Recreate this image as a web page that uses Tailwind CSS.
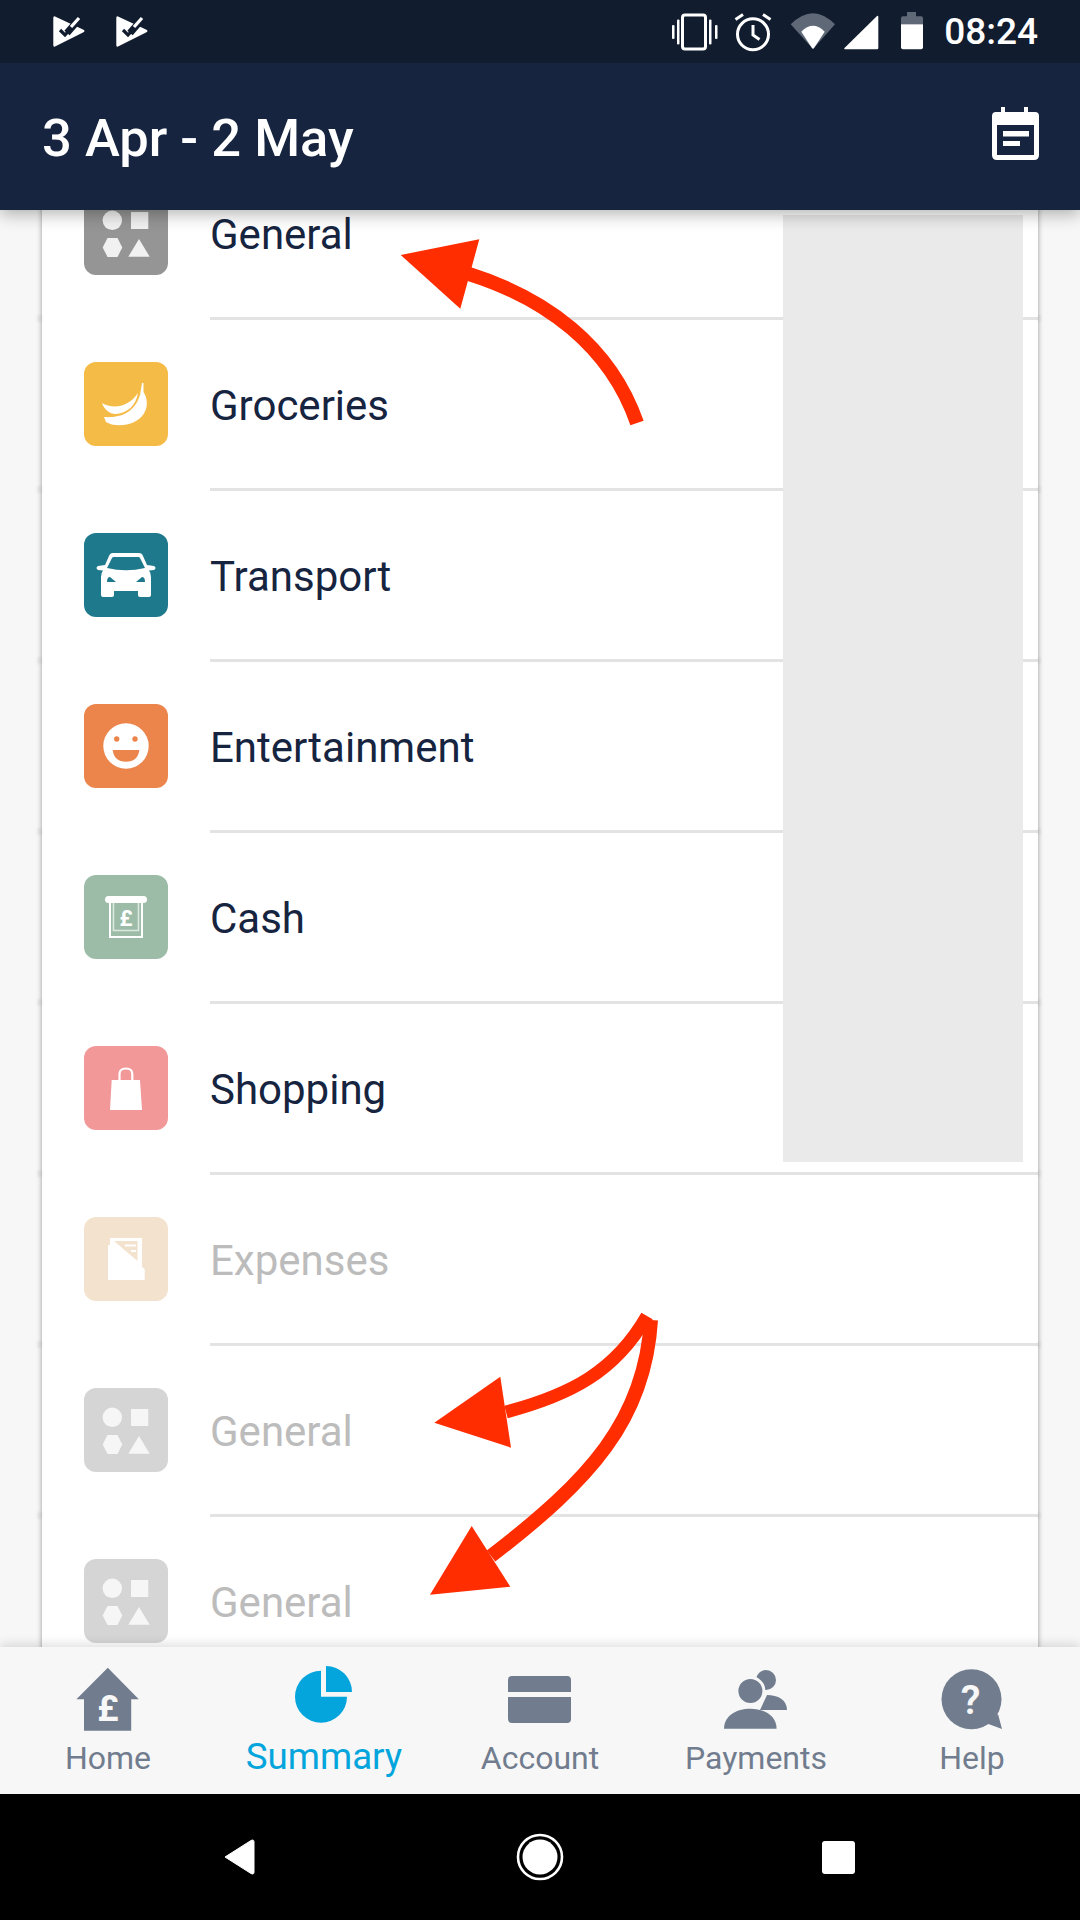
<!DOCTYPE html>
<html lang="en">
<head>
    <meta charset="UTF-8">
    <meta name="viewport" content="width=device-width, initial-scale=1.0">
    <title>Summary</title>
    <script src="https://cdn.jsdelivr.net/npm/@tailwindcss/browser@4"></script>
</head>
<body class="relative w-[1080px] h-[1920px] overflow-hidden bg-[#f7f7f7] font-[Roboto,sans-serif] flex flex-col">

    <!-- status bar -->
    <div class="h-[63px] bg-[#111c2e] flex items-center text-white shrink-0 relative z-20">
        <svg class="ml-[50px] w-[36px] h-[36px]" viewBox="0 0 36 36">
            <path d="M5 2.5 L33 15.5 Q36 17 33 18.5 L5 32.5 Q3.3 33.5 3.3 31 L3.3 4 Q3.3 1.700 5 2.500Z" fill="#fff"/>
            <path d="M17 19 L31 3" stroke="#111c2e" stroke-width="7" fill="none"/>
            <path d="M10 16 L15 21 L21 14.500" stroke="#111c2e" stroke-width="3.200" fill="none"/>
            <path d="M21 13 L29 4" stroke="#fff" stroke-width="3.200" fill="none"/>
        </svg>
        <svg class="ml-[27px] w-[36px] h-[36px]" viewBox="0 0 36 36">
            <path d="M5 2.5 L33 15.5 Q36 17 33 18.5 L5 32.5 Q3.3 33.5 3.3 31 L3.3 4 Q3.3 1.700 5 2.500Z" fill="#fff"/>
            <path d="M17 19 L31 3" stroke="#111c2e" stroke-width="7" fill="none"/>
            <path d="M10 16 L15 21 L21 14.500" stroke="#111c2e" stroke-width="3.200" fill="none"/>
            <path d="M21 13 L29 4" stroke="#fff" stroke-width="3.200" fill="none"/>
        </svg>
        <div class="flex-1"></div>
        <!-- vibrate -->
        <svg class="w-[47px] h-[40px]" viewBox="0 0 47 40" fill="#fff">
            <rect x="11.500" y="3" width="23" height="34" rx="2.500" fill="none" stroke="#fff" stroke-width="3"/>
            <rect x="1" y="13" width="2.500" height="14" rx="1"/>
            <rect x="6" y="7.500" width="2.500" height="25" rx="1"/>
            <rect x="38" y="7.500" width="2.500" height="25" rx="1"/>
            <rect x="44" y="13" width="2.500" height="14" rx="1"/>
        </svg>
        <!-- alarm -->
        <svg class="ml-[16px] w-[38px] h-[40px]" viewBox="0 0 38 40" fill="none" stroke="#fff" stroke-width="3">
            <circle cx="19" cy="22.300" r="15.500"/>
            <path d="M19 13 V23 L25.500 27.500"/>
            <path d="M1.500 7.500 L9 2.500"/>
            <path d="M29 2.500 L36.500 7.500"/>
        </svg>
        <!-- wifi -->
        <svg class="ml-[18px] w-[46px] h-[40px]" viewBox="0 0 46 40">
            <path d="M0.700 12.300 Q23 -10 45 12.300 L24 36 Q23 37.500 22 36Z" fill="#5f6877"/>
            <path d="M11.300 19.700 Q23 8 34.700 19.700 L24 36 Q23 37.500 22 36Z" fill="#fff"/>
        </svg>
        <!-- signal -->
        <svg class="ml-[7px] w-[36px] h-[40px]" viewBox="0 0 36 40">
            <path d="M34 4 Q35.300 3 35.300 5 L35.300 36 Q35.300 37.300 34 37.300 L2 37.300 Q0.500 37.300 1.500 36Z" fill="#fff"/>
        </svg>
        <!-- battery -->
        <svg class="ml-[22px] w-[22px] h-[40px]" viewBox="0 0 22 40">
            <path d="M6 0 H15 V4.300 H20 Q22 4.300 22 6.300 V12.300 H0 V6.300 Q0 4.300 2 4.300 H6Z" fill="#5f6877"/>
            <path d="M0 12.300 H22 V35.300 Q22 37.300 20 37.300 H2 Q0 37.300 0 35.300Z" fill="#fff"/>
        </svg>
        <span class="ml-[21px] mr-[42px] text-[37px] font-medium leading-none">08:24</span>
    </div>

    <!-- app bar -->
    <div class="h-[147px] bg-[#16243f] flex items-center justify-between pl-[42px] pr-[40px] shrink-0 relative z-10 shadow-[0_4px_16px_rgba(0,0,0,0.3)]">
        <h1 class="text-white text-[52.500px] font-medium leading-none mt-[3px]">3 Apr - 2 May</h1>
        <svg class="w-[48px] h-[54px] mb-[6px]" viewBox="0 0 48 54" fill="#fff">
            <path fill-rule="evenodd" d="M9 0 H13 V5 H32 V0 H36 V5 H43 Q47 5 47 9 V48 Q47 53 42 53 H5 Q0 53 0 48 V9 Q0 5 4 5 H9Z M5 18 V48 H42 V18Z"/>
            <rect x="11" y="24" width="26" height="5.500"/>
            <rect x="11" y="34" width="17" height="5"/>
        </svg>
    </div>

    <!-- list -->
    <main class="relative flex-1 overflow-hidden px-[42px]">
        <div class="-mt-[61px] bg-white shadow-[0_0_5px_rgba(0,0,0,0.4)]">

            <div class="relative flex h-[171px]">
                <div class="pl-[42px] pt-[42px]">
                    <svg class="w-[84px] h-[84px]" viewBox="0 0 84 84">
                        <rect width="84" height="84" rx="12" fill="#959595"/>
                        <g fill="#f1f1f1">
                            <circle cx="28.300" cy="29.300" r="9.700"/>
                            <rect x="47" y="21" width="17.300" height="17"/>
                            <path d="M23.500 47 H33.500 L38.300 56.500 L33.500 66 H23.500 L18.700 56.500Z"/>
                            <path d="M55 48 L65.700 65.700 H44.300Z"/>
                        </g>
                    </svg>
                </div>
                <div class="flex-1 ml-[42px] pt-[2px] flex items-center border-b-[3px] border-[#e3e3e3] text-[42px] text-[#16243f]">General</div>
                <span class="absolute left-[-5px] bottom-[-2px] w-[5px] h-[7px] bg-black/5 blur-[1px]"></span>
                <span class="absolute right-[-3px] bottom-[-2px] w-[3px] h-[7px] bg-black/5 blur-[1px]"></span>
            </div>

            <div class="relative flex h-[171px]">
                <div class="pl-[42px] pt-[42px]">
                    <svg class="w-[84px] h-[84px]" viewBox="0 0 84 84">
                        <rect width="84" height="84" rx="12" fill="#f5bb47"/>
                        <g fill="#fff">
                            <path d="M18 41 C28 47 44 46 54 31 C52 43 44 51 32 52 C25 52 20 47 18 41Z"/>
                            <path d="M20 55 C35 56 50 52 56 33 L58 21 H59.500 V30 C66 40 63 53 52 59 C42 65 28 64 22 60Z"/>
                        </g>
                    </svg>
                </div>
                <div class="flex-1 ml-[42px] pt-[2px] flex items-center border-b-[3px] border-[#e3e3e3] text-[42px] text-[#16243f]">Groceries</div>
                <span class="absolute left-[-5px] bottom-[-2px] w-[5px] h-[7px] bg-black/5 blur-[1px]"></span>
                <span class="absolute right-[-3px] bottom-[-2px] w-[3px] h-[7px] bg-black/5 blur-[1px]"></span>
            </div>

            <div class="relative flex h-[171px]">
                <div class="pl-[42px] pt-[42px]">
                    <svg class="w-[84px] h-[84px]" viewBox="0 0 84 84">
                        <rect width="84" height="84" rx="12" fill="#1e798c"/>
                        <path fill="#fff" d="M29 20 H55 Q58 20 59 23 L63 32 L70 33 Q73 35 70 37 L65 37.500 Q67 40 67 44 V62 Q67 64 65 64 H56 Q54 64 54 62 V58 H30 V62 Q30 64 28 64 H19 Q17 64 17 62 V44 Q17 40 19 37.500 L14 37 Q11 35 14 33 L21 32 L25 23 Q26 20 29 20Z"/>
                        <path fill="#1e798c" d="M29.500 24 H54.500 Q55.500 24 56 25 L61 35 Q42 39.500 23 35 L28 25 Q28.500 24 29.500 24Z"/>
                        <path fill="#1e798c" d="M23 49 Q23 44 26 44 L32 49Z"/>
                        <path fill="#1e798c" d="M61 49 Q61 44 58 44 L52 49Z"/>
                    </svg>
                </div>
                <div class="flex-1 ml-[42px] pt-[2px] flex items-center border-b-[3px] border-[#e3e3e3] text-[42px] text-[#16243f]">Transport</div>
                <span class="absolute left-[-5px] bottom-[-2px] w-[5px] h-[7px] bg-black/5 blur-[1px]"></span>
                <span class="absolute right-[-3px] bottom-[-2px] w-[3px] h-[7px] bg-black/5 blur-[1px]"></span>
            </div>

            <div class="relative flex h-[171px]">
                <div class="pl-[42px] pt-[42px]">
                    <svg class="w-[84px] h-[84px]" viewBox="0 0 84 84">
                        <rect width="84" height="84" rx="12" fill="#ec854b"/>
                        <circle cx="42" cy="42" r="22.700" fill="#fff"/>
                        <circle cx="32.700" cy="35" r="2.700" fill="#ec854b"/>
                        <circle cx="51" cy="35" r="2.700" fill="#ec854b"/>
                        <path d="M28.700 46 H55.300 Q54 57.700 42 57.700 Q30 57.700 28.700 46Z" fill="#ec854b"/>
                    </svg>
                </div>
                <div class="flex-1 ml-[42px] pt-[2px] flex items-center border-b-[3px] border-[#e3e3e3] text-[42px] text-[#16243f]">Entertainment</div>
                <span class="absolute left-[-5px] bottom-[-2px] w-[5px] h-[7px] bg-black/5 blur-[1px]"></span>
                <span class="absolute right-[-3px] bottom-[-2px] w-[3px] h-[7px] bg-black/5 blur-[1px]"></span>
            </div>

            <div class="relative flex h-[171px]">
                <div class="pl-[42px] pt-[42px]">
                    <svg class="w-[84px] h-[84px]" viewBox="0 0 84 84">
                        <rect width="84" height="84" rx="12" fill="#9dbca8"/>
                        <rect x="21" y="21" width="42" height="7" rx="3.500" fill="#fff"/>
                        <path d="M26 27 V62 H58 V27" fill="none" stroke="#fff" stroke-width="2"/>
                        <path d="M29.500 27 V55.500 H54.500 V27" fill="none" stroke="#fff" stroke-opacity="0.650" stroke-width="1.600"/>
                        <text x="42" y="50.500" text-anchor="middle" font-size="22" font-weight="700" fill="#fff">£</text>
                    </svg>
                </div>
                <div class="flex-1 ml-[42px] pt-[2px] flex items-center border-b-[3px] border-[#e3e3e3] text-[42px] text-[#16243f]">Cash</div>
                <span class="absolute left-[-5px] bottom-[-2px] w-[5px] h-[7px] bg-black/5 blur-[1px]"></span>
                <span class="absolute right-[-3px] bottom-[-2px] w-[3px] h-[7px] bg-black/5 blur-[1px]"></span>
            </div>

            <div class="relative flex h-[171px]">
                <div class="pl-[42px] pt-[42px]">
                    <svg class="w-[84px] h-[84px]" viewBox="0 0 84 84">
                        <rect width="84" height="84" rx="12" fill="#f29899"/>
                        <path d="M27.700 34 H56 L58 64 H26Z" fill="#fff"/>
                        <path d="M35.500 36 V28 Q35.500 22.500 42 22.500 Q48.300 22.500 48.300 28 V36" fill="none" stroke="#fff" stroke-width="2.200"/>
                    </svg>
                </div>
                <div class="flex-1 ml-[42px] pt-[2px] flex items-center border-b-[3px] border-[#e3e3e3] text-[42px] text-[#16243f]">Shopping</div>
                <span class="absolute left-[-5px] bottom-[-2px] w-[5px] h-[7px] bg-black/5 blur-[1px]"></span>
                <span class="absolute right-[-3px] bottom-[-2px] w-[3px] h-[7px] bg-black/5 blur-[1px]"></span>
            </div>

            <div class="relative flex h-[171px]">
                <div class="pl-[42px] pt-[42px]">
                    <svg class="w-[84px] h-[84px]" viewBox="0 0 84 84">
                        <rect width="84" height="84" rx="12" fill="#f3e2cd"/>
                        <path d="M26 21 H58 V50 H26Z" fill="#fff"/>
                        <path d="M30 24 H53.500 V44Z" fill="#f3e2cd"/>
                        <path d="M41 27.500 L52 27.500 L52 29.500 L41 29.500Z M47 33 H52 V35 H47Z" fill="#fff"/>
                        <path d="M24 28 H30 L60.700 52 V63 H24Z" fill="#fff"/>
                    </svg>
                </div>
                <div class="flex-1 ml-[42px] pt-[2px] flex items-center border-b-[3px] border-[#e3e3e3] text-[42px] text-[#bcbcbc]">Expenses</div>
                <span class="absolute left-[-5px] bottom-[-2px] w-[5px] h-[7px] bg-black/5 blur-[1px]"></span>
                <span class="absolute right-[-3px] bottom-[-2px] w-[3px] h-[7px] bg-black/5 blur-[1px]"></span>
            </div>

            <div class="relative flex h-[171px]">
                <div class="pl-[42px] pt-[42px]">
                    <svg class="w-[84px] h-[84px]" viewBox="0 0 84 84">
                        <rect width="84" height="84" rx="12" fill="#d5d5d5"/>
                        <g fill="#f6f6f6">
                            <circle cx="28.300" cy="29.300" r="9.700"/>
                            <rect x="47" y="21" width="17.300" height="17"/>
                            <path d="M23.500 47 H33.500 L38.300 56.500 L33.500 66 H23.500 L18.700 56.500Z"/>
                            <path d="M55 48 L65.700 65.700 H44.300Z"/>
                        </g>
                    </svg>
                </div>
                <div class="flex-1 ml-[42px] pt-[2px] flex items-center border-b-[3px] border-[#e3e3e3] text-[42px] text-[#bcbcbc]">General</div>
                <span class="absolute left-[-5px] bottom-[-2px] w-[5px] h-[7px] bg-black/5 blur-[1px]"></span>
                <span class="absolute right-[-3px] bottom-[-2px] w-[3px] h-[7px] bg-black/5 blur-[1px]"></span>
            </div>

            <div class="relative flex h-[171px]">
                <div class="pl-[42px] pt-[42px]">
                    <svg class="w-[84px] h-[84px]" viewBox="0 0 84 84">
                        <rect width="84" height="84" rx="12" fill="#d5d5d5"/>
                        <g fill="#f6f6f6">
                            <circle cx="28.300" cy="29.300" r="9.700"/>
                            <rect x="47" y="21" width="17.300" height="17"/>
                            <path d="M23.500 47 H33.500 L38.300 56.500 L33.500 66 H23.500 L18.700 56.500Z"/>
                            <path d="M55 48 L65.700 65.700 H44.300Z"/>
                        </g>
                    </svg>
                </div>
                <div class="flex-1 ml-[42px] pt-[2px] flex items-center border-b-[3px] border-[#e3e3e3] text-[42px] text-[#bcbcbc]">General</div>
            </div>
        </div>

        <!-- grey block over the amounts -->
        <div class="absolute left-[783px] top-[5px] w-[240px] h-[947px] bg-[#eaeaea]"></div>
    </main>

    <!-- bottom tabs -->
    <nav class="h-[147px] bg-[#f7f7f7] grid grid-cols-5 shrink-0 relative z-10 pt-[17px] shadow-[0_-3px_10px_rgba(0,0,0,0.13)] text-[32px] text-[#717d8e]">
        <div class="flex flex-col items-center">
            <svg class="w-[80px] h-[68px]" viewBox="0 0 80 68" fill="#717d8e">
                <path d="M39.800 3.700 L70.800 35.300 H63.200 V66.700 H16 V35.300 H8.400Z"/>
                <text x="40" y="56.700" text-anchor="middle" font-size="36" font-weight="700" fill="#f7f7f7">£</text>
            </svg>
            <span class="leading-[36px] mt-[8px]">Home</span>
        </div>
        <div class="flex flex-col items-center text-[#03a5dc]">
            <svg class="w-[80px] h-[68px]" viewBox="0 0 80 68" fill="#03a5dc">
                <path d="M37 6.700 A26 26 0 1 0 63 32.700 L37 32.700Z"/>
                <path d="M42 2 A26 26 0 0 1 68 28 L42 28Z"/>
            </svg>
            <span class="text-[36.700px] leading-[36px] mt-[7px]">Summary</span>
        </div>
        <div class="flex flex-col items-center">
            <svg class="w-[80px] h-[68px]" viewBox="0 0 80 68" fill="#717d8e">
                <rect x="8" y="12" width="63" height="47" rx="4"/>
                <rect x="8" y="28" width="63" height="5" fill="#f7f7f7"/>
            </svg>
            <span class="leading-[36px] mt-[8px]">Account</span>
        </div>
        <div class="flex flex-col items-center">
            <svg class="w-[80px] h-[68px]" viewBox="0 0 80 68" fill="#717d8e">
                <circle cx="50" cy="16" r="10"/>
                <path d="M51 31 C62 31 71 36 71 46 H44Z"/>
                <circle cx="34.400" cy="27" r="13.500" stroke="#f7f7f7" stroke-width="3"/>
                <path d="M8 64.700 C8 52 20 44.700 34.500 44.700 C49 44.700 60.600 52 60.600 64.700Z"/>
            </svg>
            <span class="leading-[36px] mt-[8px]">Payments</span>
        </div>
        <div class="flex flex-col items-center">
            <svg class="w-[80px] h-[68px]" viewBox="0 0 80 68" fill="#717d8e">
                <circle cx="39.500" cy="35.300" r="30"/>
                <path d="M66 50 L70 65 L55 59.500Z"/>
                <text x="38.500" y="50" text-anchor="middle" font-size="40" font-weight="600" fill="#f7f7f7">?</text>
            </svg>
            <span class="leading-[36px] mt-[8px]">Help</span>
        </div>
    </nav>

    <!-- android nav -->
    <div class="h-[126px] bg-black flex items-center shrink-0 relative z-10">
        <svg class="ml-[222px] w-[34px] h-[38px]" viewBox="0 0 34 38" fill="#fff">
            <path d="M3 19 L29 2.500 Q32 1 32 4 V34 Q32 37 29 35.500Z" stroke="#fff" stroke-width="1" stroke-linejoin="round"/>
        </svg>
        <svg class="ml-[260px] w-[48px] h-[48px]" viewBox="0 0 48 48">
            <circle cx="24" cy="24" r="22" fill="none" stroke="#fff" stroke-width="2.600"/>
            <circle cx="24" cy="24" r="17.500" fill="#fff"/>
        </svg>
        <div class="ml-[258px] w-[33px] h-[33px] bg-white rounded-[3px]"></div>
    </div>

    <!-- red annotation arrows -->
    <svg class="absolute inset-0 w-[1080px] h-[1920px] z-30 pointer-events-none" viewBox="0 0 1080 1920">
        <g fill="none" stroke="#ff2d00" stroke-width="14">
            <path d="M469 274 C545 298 610 345 637 423"/>
            <path d="M647 1316 C615 1372 570 1395 506 1412" stroke-width="13"/>
            <path d="M651 1320 C645 1420 590 1480 491 1556" stroke-width="14"/>
        </g>
        <g fill="#ff2d00">
            <path d="M400.700 255 L479.300 239.300 L460.300 308.700Z"/>
            <path d="M434.300 1422.700 L500.300 1376.700 L511 1447.700Z"/>
            <path d="M430 1594.700 L471.700 1526 L510.300 1586.700Z"/>
        </g>
    </svg>
</body>
</html>
